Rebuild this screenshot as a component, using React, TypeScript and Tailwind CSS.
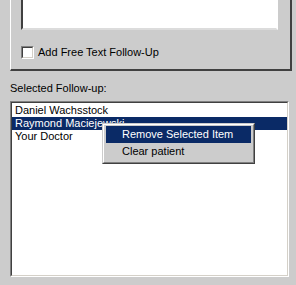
import React from "react";

export default function App() {
  const font = { fontFamily: '"Liberation Sans", Arial, sans-serif' };
  return (
    <div
      className="relative w-[296px] h-[285px] bg-[#cccccc] text-[11px] leading-[13px] text-black overflow-hidden"
      style={font}
    >
      {/* group box (top cut off) */}
      <div className="ml-[10px] w-[282px] h-[71px] border-l border-l-white border-r-2 border-r-[#404040] border-b-2 border-b-[#404040] pl-[10px]">
        <div className="w-[257px] h-[30px] bg-white border-l-2 border-l-[#404040] border-r-2 border-r-white border-b-2 border-b-[#dcdcdc]" />
        <div className="flex items-center mt-[16px] h-[13px]">
          <div className="w-[13px] h-[13px] bg-white border border-t-[#808080] border-l-[#808080] border-r-white border-b-white">
            <div className="w-full h-full border border-t-[#404040] border-l-[#404040] border-r-[#d4d0c8] border-b-[#d4d0c8]" />
          </div>
          <span className="ml-[4px]">Add Free Text Follow-Up</span>
        </div>
      </div>

      <div className="ml-[10px] mt-[11px] h-[13px]">Selected Follow-up:</div>

      <div className="ml-[10px] mt-[6px] w-[279px] h-[176px] bg-white border border-t-[#808080] border-l-[#808080] border-r-white border-b-white">
        <div className="w-full h-full border border-t-[#404040] border-l-[#404040] border-r-[#d4d0c8] border-b-[#d4d0c8] pt-px">
          <div className="h-[13px] pl-[3px]">Daniel Wachsstock</div>
          <div className="h-[13px] pl-[3px] bg-[#0a2a66] text-white">Raymond Maciejewski</div>
          <div className="h-[13px] pl-[3px]">Your Doctor</div>
        </div>
      </div>

      {/* context menu */}
      <div className="absolute left-[102px] top-[123px] w-[153px] h-[41px] bg-[#cccccc] border border-t-[#cccccc] border-l-[#cccccc] border-r-[#404040] border-b-[#404040]">
        <div className="w-full h-full border border-t-white border-l-white border-r-[#808080] border-b-[#808080] pt-px px-[2px]">
          <div className="h-[17px] flex items-center pl-[16px] bg-[#0a2a66] text-white">Remove Selected Item</div>
          <div className="h-[17px] flex items-center pl-[16px]">Clear patient</div>
        </div>
      </div>
    </div>
  );
}
